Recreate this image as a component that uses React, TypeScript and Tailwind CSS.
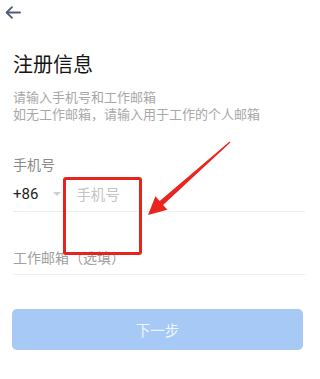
import React from "react";

export default function App() {
  const font = { fontFamily: '"Noto Sans CJK SC", "Noto Sans", sans-serif' };
  return (
    <div className="relative w-[311px] h-[379px] bg-white overflow-hidden" style={font}>
      <div className="h-[24px] pl-[5px] pt-[6px]">
        <svg width="16" height="13" viewBox="0 0 16 13" fill="none">
          <path d="M15 6.5H2" stroke="#4d5b78" strokeWidth="1.8" strokeLinecap="round" />
          <path d="M7 1.2L1.6 6.5L7 11.8" stroke="#4d5b78" strokeWidth="1.8" strokeLinecap="round" strokeLinejoin="round" />
        </svg>
      </div>
      <div className="pl-[13px] pr-[8px]">
        <div className="mt-[26px] text-[20px] leading-[28px] text-[#151515]">注册信息</div>
        <div className="mt-[11px] text-[13px] leading-[16px] text-[#a8a8a8] flex flex-col gap-px">
          <div>请输入手机号和工作邮箱</div>
          <div>如无工作邮箱，请输入用于工作的个人邮箱</div>
        </div>
        <div className="mt-[32px] text-[14px] leading-[20px] text-[#8a8a8a]">手机号</div>
        <div className="mt-[10px] flex items-center h-[20px]">
          <span className="text-[15px] leading-[20px] text-[#222]" style={{ fontFamily: 'Roboto, "Noto Sans", sans-serif' }}>+86</span>
          <span className="ml-[15px] w-0 h-0 border-l-[4px] border-r-[4px] border-t-[4px] border-l-transparent border-r-transparent border-t-[#cfcfcf]" />
          <span className="ml-[15px] text-[14.5px] leading-[20px] text-[#c4c4c4]">手机号</span>
        </div>
        <div className="mt-[7px] h-px bg-[#eeeeee] mr-[-2px]" />
        <div className="mt-[35px] text-[14px] leading-[20px] text-[#a0a0a0]">工作邮箱（选填）</div>
        <div className="mt-[7px] h-px bg-[#eeeeee] mr-[-2px]" />
        <div className="mt-[34px] ml-[-1px] h-[41px] rounded-[5px] bg-[#a7c9f6] flex items-center justify-center">
          <span className="text-[14.5px] text-white/80">下一步</span>
        </div>
      </div>
      <div className="absolute left-[63px] top-[177px] w-[79px] h-[78px] border-[3px] border-[#e6231c] rounded-[3px]" />
      <svg className="absolute left-0 top-0" width="311" height="379" viewBox="0 0 311 379">
        <polygon
          points="229.6,141.5 159.7,201.1 155.4,196.3 148,215 167.4,209.7 163.1,204.9 230.4,142.5"
          fill="#e8261f"
        />
      </svg>
    </div>
  );
}
